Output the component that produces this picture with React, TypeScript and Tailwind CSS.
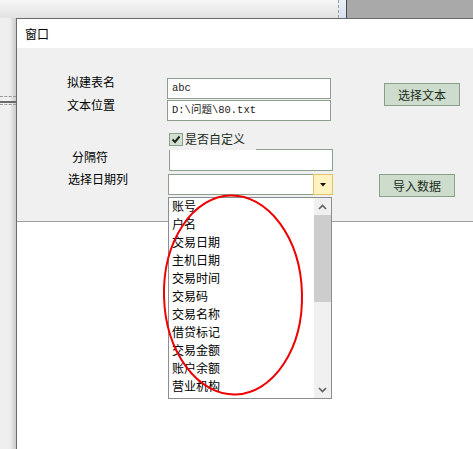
import React from 'react'

const items = [
  '账号',
  '户名',
  '交易日期',
  '主机日期',
  '交易时间',
  '交易码',
  '交易名称',
  '借贷标记',
  '交易金额',
  '账户余额',
  '营业机构',
]

const Chevron = ({ down = false }: { down?: boolean }) => (
  <svg width="9" height="6" viewBox="0 0 9 6" className={down ? 'rotate-180' : ''}>
    <polyline points="1,5 4.5,1.5 8,5" fill="none" stroke="#606060" strokeWidth="1.6" />
  </svg>
)

const TextBox = ({ value, className = '' }: { value?: string; className?: string }) => (
  <div
    className={`border border-[#8d9f8d] bg-white pl-[4px] text-[10.5px] text-[#1a1a1a] flex items-center ${className}`}
    style={{ fontFamily: '"Liberation Mono", "Noto Sans CJK SC", monospace' }}
  >
    {value}
  </div>
)

const GreenButton = ({ label, className = '' }: { label: string; className?: string }) => (
  <div
    className={`w-[76px] h-[23px] border border-[#87a087] bg-[#cedccd] flex items-center justify-center text-[12px] text-[#1b2d1b] ${className}`}
  >
    {label}
  </div>
)

export default function App() {
  return (
    <div
      className="relative w-[473px] h-[449px] overflow-hidden bg-[#ececec]"
      style={{ fontFamily: '"Noto Sans CJK SC", "Noto Sans", sans-serif' }}
    >
      {/* background window strip */}
      <div className="flex h-[18px]">
        <div className="w-[338px] bg-linear-to-b from-[#f6f6f6] to-[#e2e2e2]" />
        <div className="w-[1px] border-l border-dashed border-[#9a9a9a]" />
        <div className="w-[7px] bg-linear-to-b from-[#eaf0f9] to-[#d5e1f1]" />
        <div className="w-[1px] bg-[#4a4a4a]" />
        <div className="flex-1 bg-[#a9a9a9]" />
      </div>

      <div className="flex h-[431px]">
        {/* left shadow strip */}
        <div className="w-[16px] flex flex-col bg-linear-to-r from-[#efefef] from-60% to-[#cbcbcb]">
          <div className="h-[78px]" />
          <div className="border-t border-dashed border-[#9a9a9a]" />
          <div className="h-[4px]" />
          <div className="h-[2px] bg-[#6a6a6a]" />
          <div className="h-[1px]" />
          <div className="border-t border-dashed border-[#9a9a9a]" />
        </div>

        {/* window */}
        <div className="relative flex-1 flex flex-col border-l border-t border-[#6b6b6b] bg-white">
          <div className="h-[29px] flex items-center pl-[8px] text-[12px] text-black">窗口</div>

          <div className="h-[174px] bg-[#f0f0f0] border-b border-[#a0a0a0] flex flex-col">
            {/* table name / file path */}
            <div className="mt-[24px] flex items-start">
              <div className="ml-[50px] w-[100px] flex flex-col text-[12px] text-black">
                <div className="h-[20px] leading-[20px]">拟建表名</div>
                <div className="mt-[3px] h-[20px] leading-[20px]">文本位置</div>
              </div>
              <div className="mt-[6px] flex flex-col">
                <TextBox value="abc" className="w-[164px] h-[21px]" />
                <TextBox value="D:\问题\80.txt" className="mt-[1px] w-[164px] h-[21px]" />
              </div>
              <GreenButton label="选择文本" className="ml-[53px] mt-[11px]" />
            </div>

            {/* custom checkbox */}
            <div className="relative z-10 mt-[10px] ml-[152px] w-[87px] h-[19px] flex items-start bg-[#f0f0f0]">
              <div className="mt-[2px] w-[14px] h-[13px] border border-[#8d9f8d] bg-[#d2ded2] flex items-center justify-center">
                <svg width="10" height="9" viewBox="0 0 10 9">
                  <path d="M1.5 4.5 L4 7 L8.5 1.5" fill="none" stroke="#1a2a1a" strokeWidth="2" />
                </svg>
              </div>
              <div className="ml-[2px] h-[15px] leading-[15px] text-[12px] text-[#1b2d1b]">是否自定义</div>
            </div>

            {/* separator */}
            <div className="-mt-[1px] flex items-start">
              <div className="ml-[55px] w-[97px] h-[16px] leading-[16px] text-[12px] text-black">分隔符</div>
              <TextBox className="w-[164px] h-[22px]" />
            </div>

            {/* date column */}
            <div className="mt-[3px] flex items-start">
              <div className="ml-[51px] w-[100px] -mt-[5px] h-[20px] leading-[20px] text-[12px] text-black">选择日期列</div>
              <div className="w-[165px] h-[21px] flex">
                <div className="flex-1 border-l border-t border-b border-[#8d9f8d] bg-white" />
                <div className="w-[20px] border border-[#e4c262] bg-[#fff2c2] flex items-center justify-center">
                  <svg width="6" height="4" viewBox="0 0 6 4">
                    <polygon points="0,0 6,0 3,3.5" fill="#111" />
                  </svg>
                </div>
              </div>
              <GreenButton label="导入数据" className="ml-[46px]" />
            </div>
          </div>

          {/* open dropdown list */}
          <div className="absolute left-[151px] top-[178px] w-[164px] h-[202px] border border-[#8a8e94] bg-white overflow-hidden">
            <div className="-mt-[1px] flex flex-col pl-[3px] pr-[17px] text-[12px] text-black">
              {items.map((it) => (
                <div key={it} className="h-[18px] leading-[18px] shrink-0">
                  {it}
                </div>
              ))}
            </div>
            <div className="absolute right-0 top-0 bottom-0 w-[17px] bg-[#f0f0f0] flex flex-col">
              <div className="h-[17px] flex items-center justify-center">
                <Chevron />
              </div>
              <div className="h-[87px] bg-[#cdcdcd]" />
              <div className="flex-1" />
              <div className="h-[17px] flex items-center justify-center">
                <Chevron down />
              </div>
            </div>
          </div>
        </div>
      </div>

      {/* red annotation ellipse */}
      <svg className="absolute left-[150px] top-[185px] pointer-events-none" width="170" height="220" viewBox="0 0 170 220">
        <ellipse cx="83" cy="110" rx="69" ry="99.5" fill="none" stroke="#ee0000" strokeWidth="2" transform="rotate(-1.5 83 110)" />
      </svg>
    </div>
  )
}
